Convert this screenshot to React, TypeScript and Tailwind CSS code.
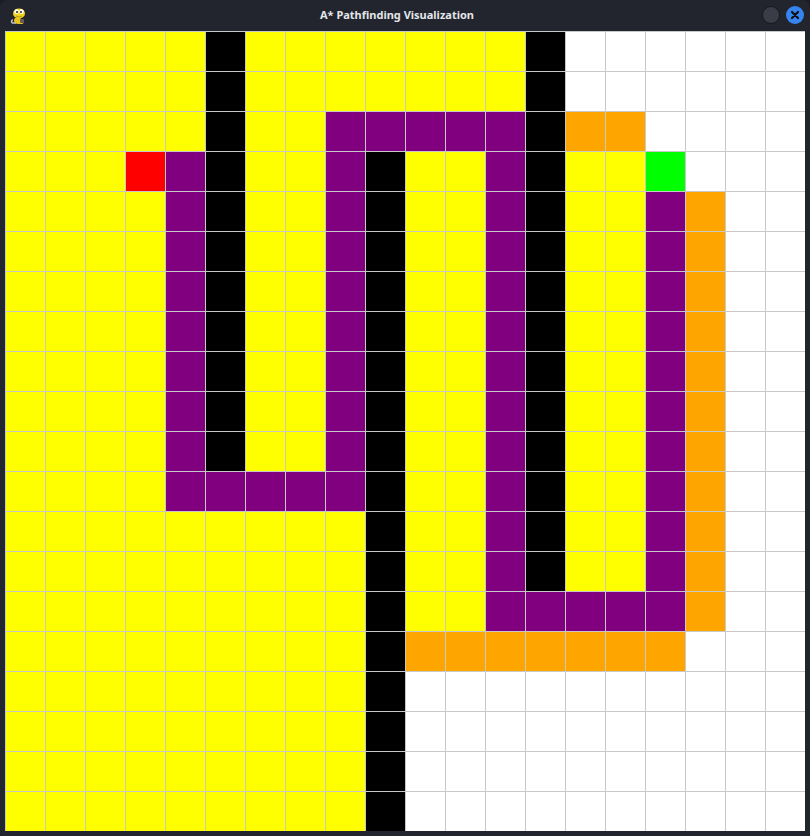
import React from 'react';

const ROWS = [
  'YYYYYBYYYYYYYBWWWWWW',
  'YYYYYBYYYYYYYBWWWWWW',
  'YYYYYBYYPPPPPBOOWWWW',
  'YYYRPBYYPBYYPBYYGWWW',
  'YYYYPBYYPBYYPBYYPOWW',
  'YYYYPBYYPBYYPBYYPOWW',
  'YYYYPBYYPBYYPBYYPOWW',
  'YYYYPBYYPBYYPBYYPOWW',
  'YYYYPBYYPBYYPBYYPOWW',
  'YYYYPBYYPBYYPBYYPOWW',
  'YYYYPBYYPBYYPBYYPOWW',
  'YYYYPPPPPBYYPBYYPOWW',
  'YYYYYYYYYBYYPBYYPOWW',
  'YYYYYYYYYBYYPBYYPOWW',
  'YYYYYYYYYBYYPPPPPOWW',
  'YYYYYYYYYBOOOOOOOWWW',
  'YYYYYYYYYBWWWWWWWWWW',
  'YYYYYYYYYBWWWWWWWWWW',
  'YYYYYYYYYBWWWWWWWWWW',
  'YYYYYYYYYBWWWWWWWWWW',
];

const cellColors: Record<string, string> = {
  Y: 'bg-[#ffff00]',
  B: 'bg-black',
  P: 'bg-[#800080]',
  O: 'bg-[#ffa500]',
  R: 'bg-[#ff0000]',
  G: 'bg-[#00ff00]',
  W: 'bg-white',
};

const PygameIcon = () => (
  <svg width="18" height="20" viewBox="0 0 18 20">
    {/* body */}
    <path d="M5 12 C3 14 4 18 8 18 L12 18 C14 18 14 15 12 14 L10 12 Z" fill="#e8c31a" />
    <path d="M3 14 C1 14 1 17 3 17 L6 17" stroke="#c8c8c8" strokeWidth="1.5" fill="none" />
    <rect x="10" y="13" width="4" height="4" rx="1" fill="#6b5a55" />
    {/* head */}
    <ellipse cx="9" cy="7.5" rx="6" ry="5" fill="#f2d21b" />
    <ellipse cx="6.5" cy="5.5" rx="2.2" ry="2.6" fill="#fff" />
    <ellipse cx="11.5" cy="5.5" rx="2.2" ry="2.6" fill="#fff" />
    <circle cx="7" cy="6" r="1" fill="#222" />
    <circle cx="11" cy="6" r="1" fill="#222" />
    <path d="M6 10 Q9 12 12 10" stroke="#a88a10" strokeWidth="0.8" fill="none" />
  </svg>
);

export default function App() {
  return (
    <div className="w-[810px] h-[836px] bg-[#1b1d24]">
      <div className="w-[810px] h-[836px] rounded-t-[8px] rounded-b-[3px] bg-[#22252e] flex flex-col">
        <div className="relative h-[31px] flex items-center justify-center shrink-0">
          <div className="absolute left-[10px] top-[6px]">
            <PygameIcon />
          </div>
          <span
            className="text-[11px] font-bold text-[#e4e6ea] pr-[16px]"
            style={{ fontFamily: '"Noto Sans", "DejaVu Sans", sans-serif' }}
          >
            A* Pathfinding Visualization
          </span>
          <div className="absolute right-[6px] top-[6px] flex items-center gap-[6px]">
            <div className="w-[18px] h-[18px] rounded-full bg-[#3a3d48] border border-[#16181d]" />
            <div className="w-[18px] h-[18px] rounded-full bg-[#3584f0] flex items-center justify-center">
              <svg width="10" height="10" viewBox="0 0 10 10">
                <path d="M2 2 L8 8 M8 2 L2 8" stroke="#111" strokeWidth="2.2" strokeLinecap="round" />
              </svg>
            </div>
          </div>
        </div>
        <div className="px-[5px] pb-[5px]">
          <div className="grid grid-cols-[repeat(20,40px)] grid-rows-[repeat(20,40px)] w-[800px] h-[800px]">
            {ROWS.map((row, r) =>
              row.split('').map((ch, c) => (
                <div key={`${r}-${c}`} className={`border-l border-t border-[#c8c8c8] ${cellColors[ch]}`} />
              ))
            )}
          </div>
        </div>
      </div>
    </div>
  );
}
